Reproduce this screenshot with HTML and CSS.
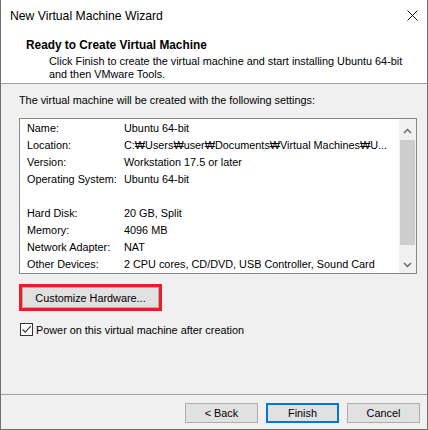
FILE: index.html
```html
<!DOCTYPE html>
<html>
<head>
<meta charset="utf-8">
<link rel="stylesheet" href="styles.css">
</head>
<body>
<div class="window">
  <div class="titlebar">
    <span class="title">New Virtual Machine Wizard</span>
    <svg class="close" width="11" height="11" viewBox="0 0 11 11"><path d="M0.5 0.5L10.5 10.5M10.5 0.5L0.5 10.5" stroke="#111" stroke-width="1" fill="none"/></svg>
  </div>
  <div class="header">
    <div class="h-title">Ready to Create Virtual Machine</div>
    <div class="h-desc">Click Finish to create the virtual machine and start installing Ubuntu 64-bit<br>and then VMware Tools.</div>
  </div>
  <div class="body">
    <div class="intro">The virtual machine will be created with the following settings:</div>
    <div class="listbox">
      <div class="rows">
        <div class="row"><span class="label">Name:</span><span class="value">Ubuntu 64-bit</span></div>
        <div class="row"><span class="label">Location:</span><span class="value">C:₩Users₩user₩Documents₩Virtual Machines₩U...</span></div>
        <div class="row"><span class="label">Version:</span><span class="value">Workstation 17.5 or later</span></div>
        <div class="row"><span class="label">Operating System:</span><span class="value">Ubuntu 64-bit</span></div>
        <div class="row"></div>
        <div class="row"><span class="label">Hard Disk:</span><span class="value">20 GB, Split</span></div>
        <div class="row"><span class="label">Memory:</span><span class="value">4096 MB</span></div>
        <div class="row"><span class="label">Network Adapter:</span><span class="value">NAT</span></div>
        <div class="row"><span class="label">Other Devices:</span><span class="value">2 CPU cores, CD/DVD, USB Controller, Sound Card</span></div>
      </div>
      <div class="scrollbar">
        <div class="sb-btn"><svg width="9" height="6" viewBox="0 0 9 6"><path d="M1 5L4.5 1.5L8 5" stroke="#606060" stroke-width="1.4" fill="none"/></svg></div>
        <div class="sb-track"><div class="sb-thumb"></div></div>
        <div class="sb-btn"><svg width="9" height="6" viewBox="0 0 9 6"><path d="M1 1L4.5 4.5L8 1" stroke="#606060" stroke-width="1.4" fill="none"/></svg></div>
      </div>
    </div>
    <button class="btn custom">Customize Hardware...</button>
    <label class="check"><span class="box"><svg width="11" height="11" viewBox="0 0 11 11"><path d="M1.5 5.5L4.2 8.2L9.8 2.2" stroke="#333" stroke-width="1.1" fill="none"/></svg></span>Power on this virtual machine after creation</label>
  </div>
  <div class="footer">
    <button class="btn">&lt; Back</button>
    <button class="btn primary">Finish</button>
    <button class="btn">Cancel</button>
  </div>
</div>
</body>
</html>
```
FILE: styles.css
```css
html, body {
  margin: 0;
  padding: 0;
  background: #f0f0f0;
}

.window {
  width: 428px;
  height: 430px;
  box-sizing: border-box;
  border: 1px solid #707070;
  border-top: none;
  background: #f0f0f0;
  display: flex;
  flex-direction: column;
  font-family: "Liberation Sans", "DejaVu Sans", sans-serif;
  font-size: 10.85px;
  color: #000;
}

.titlebar {
  height: 31px;
  flex: none;
  background: #fff;
  display: flex;
  align-items: center;
  justify-content: space-between;
  padding: 1px 9px 0 9px;
  box-sizing: border-box;
}

.title {
  font-size: 12.2px;
  line-height: 14px;
}

.close {
  display: block;
  margin-top: -1px;
}

.header {
  flex: none;
  background: #fff;
  border-bottom: 1px solid #a0a0a0;
  padding: 7px 0 2px 25px;
}

.h-title {
  font-weight: bold;
  font-size: 11.85px;
  line-height: 14px;
}

.h-desc {
  margin: 3px 0 0 23px;
  line-height: 13px;
}

.body {
  padding: 10px 10px 0 18px;
}

.intro {
  line-height: 13px;
}

.listbox {
  margin-top: 11px;
  height: 156px;
  box-sizing: border-box;
  border: 1px solid #828790;
  background: #fff;
  display: flex;
}

.rows {
  flex: 1;
  padding: 1px 0 0 7px;
  overflow: hidden;
}

.row {
  display: flex;
  height: 17px;
  line-height: 17px;
  white-space: nowrap;
}

.label {
  width: 97px;
  flex: none;
}

.scrollbar {
  width: 17px;
  flex: none;
  background: #f0f0f0;
  display: flex;
  flex-direction: column;
}

.sb-btn {
  height: 17px;
  display: flex;
  align-items: center;
  justify-content: center;
  flex: none;
}

.sb-btn:first-child {
  padding-top: 3px;
}

.sb-track {
  flex: 1;
  padding: 0 1px;
}

.sb-thumb {
  margin-top: 1px;
  height: 105px;
  background: #cdcdcd;
}

.btn {
  font-family: inherit;
  font-size: 10.85px;
  color: #000;
  background: #e1e1e1;
  border: 1px solid #adadad;
  padding: 0;
  margin: 0;
  box-sizing: border-box;
}

.custom {
  display: block;
  margin-top: 13px;
  width: 137px;
  height: 21px;
  margin-left: 3px;
  outline: 3px solid #ed1c24;
}

.check {
  margin-top: 15px;
  display: flex;
  align-items: center;
  gap: 3px;
  height: 13px;
  margin-left: 1px;
}

.box {
  width: 13px;
  height: 13px;
  box-sizing: border-box;
  border: 1px solid #333;
  background: #fff;
  display: flex;
  align-items: center;
  justify-content: center;
}

.box svg {
  display: block;
}

.footer {
  margin-top: auto;
  border-top: 1px solid #a0a0a0;
  padding: 8px 7px 6px 0;
  display: flex;
  justify-content: flex-end;
  gap: 8px;
}

.footer .btn {
  width: 73px;
  height: 20px;
}

.footer .primary {
  border: 2px solid #0078d7;
}
```
